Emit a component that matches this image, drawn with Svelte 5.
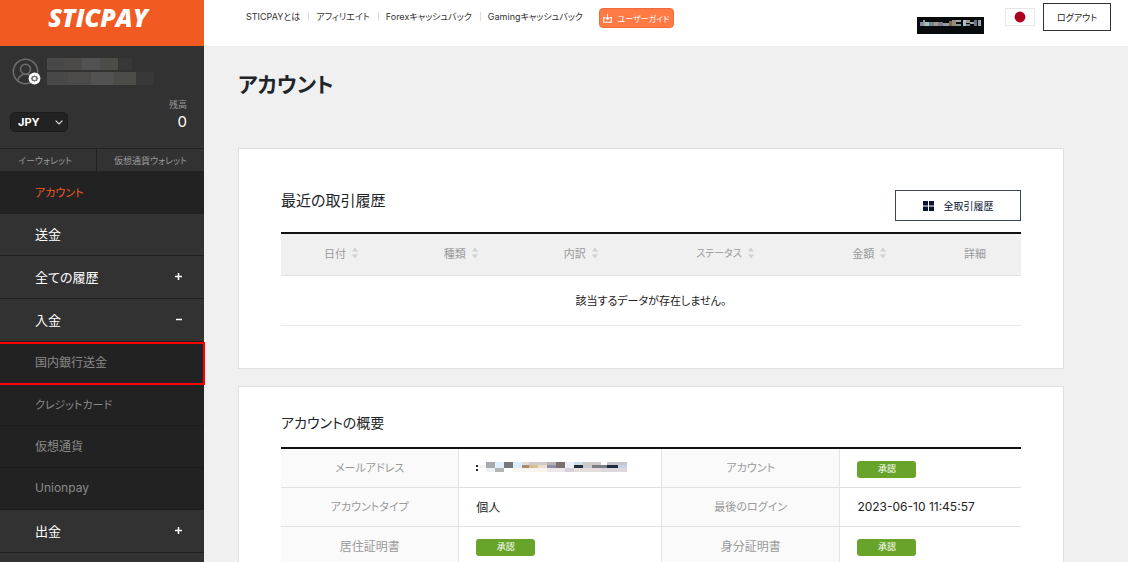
<script>
  let currency = $state('JPY');

  const topLinks = ['STICPAYとは', 'アフィリエイト', 'Forexキャッシュバック', 'Gamingキャッシュバック'];

  const menu = [
    { label: 'アカウント', kind: 'current' },
    { label: '送金', kind: 'link' },
    { label: '全ての履歴', kind: 'group', sign: '+' },
    { label: '入金', kind: 'group', sign: '−' },
    { label: '国内銀行送金', kind: 'sub', marked: true },
    { label: 'クレジットカード', kind: 'sub' },
    { label: '仮想通貨', kind: 'sub' },
    { label: 'Unionpay', kind: 'sub' },
    { label: '出金', kind: 'group', sign: '+' }
  ];

  const columns = [
    { label: '日付', width: 16.2, sort: true },
    { label: '種類', width: 16.2, sort: true },
    { label: '内訳', width: 16.2, sort: true },
    { label: 'ステータス', width: 22.8, sort: true },
    { label: '金額', width: 16.2, sort: true },
    { label: '詳細', width: 12.4, sort: false }
  ];

  const summary = [
    [{ label: 'メールアドレス', masked: true }, { label: 'アカウント', badge: '承認' }],
    [{ label: 'アカウントタイプ', text: '個人' }, { label: '最後のログイン', text: '2023-06-10 11:45:57' }],
    [{ label: '居住証明書', badge: '承認' }, { label: '身分証明書', badge: '承認' }]
  ];

  // Labels written mostly in katakana are set one step smaller than kanji ones
  const isKana = (label) => /[ァ-ヶー]{3}/.test(label);

  // Masked mail address: one [x, y, width, height, colour] entry per tile
  const mailTiles = [
    [0, 4, 2, 2, '#222'], [0, 8, 2, 2, '#222'], [3, 4, 7, 3, '#f1f1ee'],
    [10, 1, 9, 6, '#a9a9ad'], [19, 1, 9, 6, '#dff1fb'], [28, 1, 9, 6, '#77767c'],
    [19, 7, 9, 4, '#b4b4b6'], [10, 7, 9, 4, '#edf1f3'], [37, 1, 9, 6, '#d9eefa'],
    [46, 1, 7, 3, '#e1dcd8'], [46, 4, 7, 3, '#a58b70'], [53, 1, 18, 3, '#cecaca'],
    [53, 4, 9, 3, '#dcbe94'], [62, 4, 9, 3, '#f0dfcb'], [37, 7, 34, 4, '#faf4ee'],
    [71, 1, 9, 3, '#b9b2b7'], [71, 4, 9, 3, '#8d8caa'], [80, 1, 9, 6, '#79716f'],
    [71, 7, 18, 4, '#ebe7eb'], [89, 1, 9, 6, '#eeeefa'], [89, 7, 9, 4, '#d8d0d7'],
    [98, 1, 9, 3, '#c8dde8'], [98, 4, 9, 3, '#222f3e'], [107, 1, 18, 3, '#cfc9c7'],
    [107, 4, 9, 3, '#c8c8d2'], [116, 4, 15, 3, '#7a7e83'], [98, 7, 27, 4, '#e6dedc'],
    [131, 1, 20, 3, '#c6c5cb'], [131, 4, 11, 3, '#202a3d'], [142, 4, 9, 3, '#c5d3e6'],
    [125, 7, 26, 4, '#dcd7dc']
  ];

  const userTiles = [
    [3, 5, 3, 4, '#8886a3'], [6, 3, 2, 6, '#9d98a8'], [8, 5, 4, 4, '#a5bfba'],
    [12, 5, 5, 4, '#6d8796'], [17, 5, 4, 4, '#a89788'], [21, 5, 5, 4, '#7b7d8e'],
    [26, 6, 6, 3, '#8f9fa4'], [32, 4, 3, 5, '#806a4d'], [35, 3, 4, 6, '#9a8d78'],
    [39, 3, 5, 2, '#a9a9ae'], [39, 7, 5, 2, '#8d9590'], [46, 3, 3, 6, '#a8c1cf'],
    [49, 3, 4, 3, '#a59887'], [49, 7, 4, 2, '#77808d'], [53, 5, 4, 2, '#9bacb4'],
    [57, 3, 3, 6, '#746e8b'], [61, 3, 3, 6, '#a1a5ab']
  ];
</script>

<div class="app">
  <aside>
    <a class="logo" href="#home">STICPAY</a>

    <div class="profile">
      <div class="person">
        <svg class="avatar" width="30" height="28" viewBox="0 0 30 28" fill="none">
          <circle cx="13.5" cy="13.5" r="12.2" stroke="#6d6d6d" stroke-width="1.5" />
          <circle cx="13.5" cy="11.2" r="5" stroke="#6d6d6d" stroke-width="1.5" />
          <path d="M5.6 22.5c1.3-4 4.3-6.3 7.9-6.3s6.6 2.3 7.9 6.3" stroke="#6d6d6d" stroke-width="1.5" />
          <circle cx="22.5" cy="20.5" r="5.9" fill="#fff" />
          <path d="M22.5 17.2l1.1.9 1.4-.2.4 1.4 1 1.2-1 1.2-.4 1.4-1.4-.2-1.1.9-1.1-.9-1.4.2-.4-1.4-1-1.2 1-1.2.4-1.4 1.4.2z" fill="#777" />
          <circle cx="22.5" cy="20.5" r="1.5" fill="#fff" />
        </svg>
        <svg width="110" height="27" viewBox="0 0 110 27" aria-hidden="true">
          <path fill="#484848" d="M0 0h17v12H0zM0 14h21v13H0z" />
          <path fill="#4c4b4a" d="M17 0h18v12H17zM21 14h23v13H21z" />
          <path fill="#525252" d="M35 0h18v12H35zM44 14h23v13H44z" />
          <path fill="#4c4c49" d="M53 0h18v12H53zM67 14h22v13H67z" />
          <path fill="#383838" d="M71 0h14v12H71zM89 14h18v13H89z" />
        </svg>
      </div>
      <div class="balance">
        <label class="currency">
          <select bind:value={currency} aria-label="通貨">
            <option>JPY</option>
            <option>USD</option>
          </select>
          <svg width="8" height="5" viewBox="0 0 8 5" fill="none" stroke="#ddd" stroke-width="1.2"><path d="M.6.6L4 4 7.4.6" /></svg>
        </label>
        <div class="amount"><small>残高</small><strong>0</strong></div>
      </div>
    </div>

    <div class="wallets">
      <button>イーウォレット</button>
      <button>仮想通貨ウォレット</button>
    </div>

    <nav class="menu">
      {#each menu as item}
        {#if item.kind === 'group'}
          <button class="item group">
            <span>{item.label}</span>
            <svg width="7" height="7" viewBox="0 0 7 7" stroke="#fff" stroke-width="1.5">
              <path d={item.sign === '+' ? 'M0 3.5h7M3.5 0v7' : 'M1 3.5h6'} />
            </svg>
          </button>
        {:else}
          <a class="item {item.kind}" class:kana={isKana(item.label)} class:marked={item.marked} href="#menu">{item.label}</a>
        {/if}
      {/each}
    </nav>
  </aside>

  <div class="page">
    <header>
      <nav class="top">
        {#each topLinks as link}
          <a href="#top">{link}</a>
        {/each}
      </nav>
      <button class="guide">
        <svg width="9" height="9" viewBox="0 0 9 9" fill="none" stroke="#fff" stroke-width="1.1">
          <path d="M4.5 0v5.2M2.6 3.5l1.9 1.9 1.9-1.9M2 3.6H.7v4.7h7.6V3.6H7" />
        </svg>
        ユーザーガイド
      </button>
      <div class="tools">
        <svg class="user" width="67" height="17" viewBox="0 0 67 17" aria-hidden="true">
          <path fill="#080b0e" d="M0 0h67v17H0z" />
          {#each userTiles as [x, y, w, h, fill]}
            <rect {x} {y} width={w} height={h} {fill} />
          {/each}
        </svg>
        <button class="flag" aria-label="日本語">
          <svg width="30" height="18" viewBox="0 0 30 18">
            <path fill="#fff" stroke="#e6e6e6" d="M.5.5h29v17H.5z" />
            <circle cx="15" cy="9" r="5.4" fill="#b00020" />
          </svg>
        </button>
        <button class="logout">ログアウト</button>
      </div>
    </header>

    <main>
      <h1>アカウント</h1>

      <section class="card recent">
        <div class="head">
          <h2>最近の取引履歴</h2>
          <button class="all">
            <svg width="11" height="10" viewBox="0 0 11 10" fill="#0b1533"><path d="M0 0h5v4.4H0zM6 0h5v4.4H6zM0 5.6h5V10H0zM6 5.6h5V10H6z" /></svg>
            全取引履歴
          </button>
        </div>
        <table class="history">
          <thead>
            <tr>
              {#each columns as col}
                <th style:width="{col.width}%">
                  {#if col.sort}
                    <button class="sort" class:kana={isKana(col.label)}>
                      {col.label}
                      <svg width="6" height="12" viewBox="0 0 6 12" fill="#d0d0d0"><path d="M0 4.5L3 .5l3 4zM0 7.5h6l-3 4z" /></svg>
                    </button>
                  {:else}{col.label}{/if}
                </th>
              {/each}
            </tr>
          </thead>
          <tbody>
            <tr><td colspan="6">該当するデータが存在しません。</td></tr>
          </tbody>
        </table>
      </section>

      <section class="card overview">
        <h2 class="kana">アカウントの概要</h2>
        <table class="summary">
          <colgroup><col class="c1" /><col class="c2" /><col class="c1" /><col /></colgroup>
          <tbody>
            {#each summary as row}
              <tr>
                {#each row as cell}
                  <th scope="row" class:kana={isKana(cell.label)}>{cell.label}</th>
                  <td>
                    {#if cell.badge}
                      <span class="badge">{cell.badge}</span>
                    {:else if cell.masked}
                      <svg class="mask" width="152" height="12" viewBox="0 0 152 12" aria-hidden="true">
                        {#each mailTiles as [x, y, w, h, fill]}
                          <rect {x} {y} width={w} height={h} {fill} />
                        {/each}
                      </svg>
                    {:else}{cell.text}{/if}
                  </td>
                {/each}
              </tr>
            {/each}
          </tbody>
        </table>
      </section>
    </main>
  </div>
</div>

<style>
  :global(body) { margin: 0; background: #f0f0f0; overflow: hidden; }
  * { box-sizing: border-box; }
  .app {
    display: flex;
    height: 100vh;
    overflow: hidden;
    font-family: Inter, "Noto Sans CJK JP", sans-serif;
    font-feature-settings: "palt";
    font-size: 12px;
    color: #222;
  }
  button, select { font: inherit; font-feature-settings: inherit; color: inherit; background: none; border: 0; padding: 0; margin: 0; }
  a { color: inherit; text-decoration: none; }
  svg { display: block; flex: none; }

  aside { flex: none; width: 204px; background: #323232; color: #fff; }
  .logo {
    display: flex;
    justify-content: center;
    height: 46px;
    padding: 0 12px 12px 4px;
    background: #f15a22;
    font: italic 800 25px/34px "Open Sans", sans-serif;
  }
  .profile { height: 102px; padding: 12px 17px 0 10px; }
  .person { display: flex; gap: 5px; padding-left: 2px; }
  .balance { display: flex; justify-content: space-between; align-items: flex-end; margin-top: 12px; }
  .currency { position: relative; }
  .currency select {
    display: block;
    appearance: none;
    width: 58px;
    height: 20px;
    padding-left: 7px;
    border: 1px solid #1c1c1c;
    border-radius: 5px;
    background: #222;
    font-size: 11px;
    font-weight: 700;
  }
  .currency svg { position: absolute; right: 5px; top: 8px; pointer-events: none; }
  .amount { display: flex; flex-direction: column; align-items: flex-end; }
  .amount small { font-size: 9px; line-height: 14px; color: #999; }
  .amount strong { font-size: 15px; line-height: 20px; font-weight: 400; }
  .wallets { display: grid; grid-template-columns: 96px 1fr; height: 24px; border: solid #222; border-width: 1px 0; }
  .wallets button { padding: 0 6px 0 0; font-size: 9px; color: #999; }
  .wallets button + button { border-left: 1px solid #222; padding: 0; }
  .menu { display: flex; flex-direction: column; }
  .item { display: flex; align-items: center; height: 42px; padding: 0 22px 2px 35px; border-bottom: 1px solid #202020; font-size: 13px; }
  .group { height: 43px; justify-content: space-between; }
  .current, .sub { background: #222; }
  .current { color: #f15a22; }
  .sub { color: #8a8a8a; font-size: 12px; border-color: #1d1d1d; }
  .item.kana { font-size: 11px; }
  .marked { position: relative; }
  .marked::after { content: ""; position: absolute; inset: 0 -1px -2px -2px; border: 2px solid #f00; }

  .page { flex: 1; min-width: 0; }
  header { display: flex; align-items: flex-start; height: 46px; padding: 0 17px 0 42px; background: #fff; }
  .top { display: flex; align-items: center; height: 33px; font-size: 9px; color: #333; white-space: nowrap; }
  .top a + a { margin-left: 8px; padding-left: 8px; background: linear-gradient(#ddd, #ddd) left center / 1px 9px no-repeat; }
  .guide {
    display: flex;
    align-items: center;
    justify-content: center;
    gap: 5px;
    width: 75px;
    height: 20px;
    margin: 8px 0 0 16px;
    border: 1px solid #f2683a;
    border-radius: 4px;
    background: #ff7a45;
    color: #fff;
    font-size: 8px;
    white-space: nowrap;
  }
  .tools { display: flex; align-items: flex-start; margin-left: auto; }
  .user { margin-top: 17px; }
  .flag { margin: 8px 8px 0 21px; }
  .logout { width: 68px; height: 28px; margin-top: 3px; border: 1px solid #333; font-size: 9px; }

  main { padding: 21px 64px 0 34px; }
  h1, h2 { margin: 0; }
  h1 { font-size: 21px; line-height: 36px; font-weight: 700; color: #212529; margin-bottom: 45px; }
  h2 { font-size: 15px; line-height: 22px; font-weight: 400; color: #212529; }
  .card { padding: 0 42px; border: 1px solid #e0e0e0; background: #fff; }
  .recent { padding-top: 41px; padding-bottom: 42px; margin-bottom: 17px; }
  .head { display: flex; justify-content: space-between; margin-bottom: 11px; }
  .all { display: flex; align-items: center; justify-content: center; gap: 10px; width: 126px; height: 31px; border: 1px solid #3b455e; color: #0b1533; font-size: 10px; }
  table { width: 100%; table-layout: fixed; border-collapse: separate; border-spacing: 0; border-top: 2px solid #111; }
  th, td { padding: 0 0 2px; font-weight: 400; }
  th { color: #999; text-align: center; }
  .history th { height: 42px; padding-bottom: 4px; background: #f0f0f0; border-bottom: 1px solid #e2e2e2; font-size: 11px; }
  .sort { display: inline-flex; align-items: center; gap: 6px; }
  .sort.kana { font-size: 10px; }
  .history td { height: 50px; border-bottom: 1px solid #e9e9e9; text-align: center; font-size: 11px; }
  .overview { padding-top: 25px; padding-bottom: 42px; }
  .overview h2 { margin-bottom: 13px; }
  h2.kana { font-size: 14px; }
  .c1 { width: 24.1%; }
  .c2 { width: 27.4%; }
  .summary th, .summary td { height: 39px; border-bottom: 1px solid #e0e0e0; }
  .summary th { background: #fafafa; border-right: 1px solid #e5e5e5; }
  .summary th.kana { font-size: 11px; }
  .summary td { padding-left: 17px; }
  .summary td:nth-child(2) { border-right: 1px solid #e5e5e5; }
  .badge { display: block; width: 59px; height: 17px; margin-top: 4px; border-radius: 3px; background: #68a42a; color: #fff; font: 9px/15px "Noto Sans CJK JP", sans-serif; text-align: center; }
</style>
